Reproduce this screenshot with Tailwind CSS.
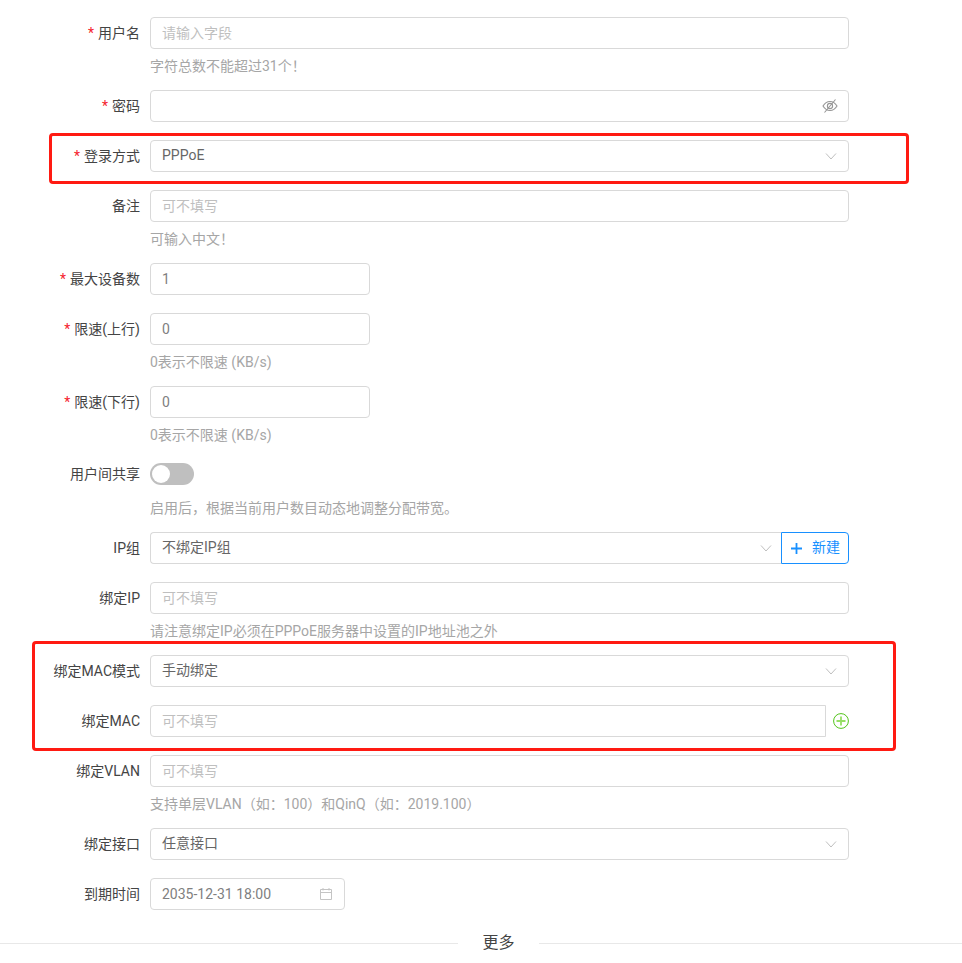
<!DOCTYPE html>
<html lang="zh-CN">
<head>
  <meta charset="UTF-8" />
  <title>用户设置</title>
  <script src="https://cdn.jsdelivr.net/npm/@tailwindcss/browser@4"></script>
</head>
<body class="bg-white font-['Roboto','Noto_Sans_CJK_SC',sans-serif] text-sm text-[#666]">
  <div class="relative h-[963px] w-[962px] overflow-hidden pt-[17px]">

    <!-- 用户名 -->
    <div class="flex h-8 w-[849px]">
      <label class="flex w-[140px] items-center justify-end text-[#444]"><span class="mr-1 text-[#f5222d]">*</span>用户名</label>
      <input class="ml-[10px] h-8 w-[699px] rounded border border-[#d9d9d9] px-[11px] outline-none placeholder:text-[#bfbfbf]" placeholder="请输入字段" />
    </div>
    <p class="mt-2 mb-[15px] ml-[150px] h-[18px] leading-[18px] text-[#a6a6a6]">字符总数不能超过31个！</p>

    <!-- 密码 -->
    <div class="mb-[18px] flex h-8 w-[849px]">
      <label class="flex w-[140px] items-center justify-end text-[#444]"><span class="mr-1 text-[#f5222d]">*</span>密码</label>
      <div class="relative ml-[10px] w-[699px]">
        <input type="password" class="h-8 w-full rounded border border-[#d9d9d9] px-[11px] outline-none" />
        <svg class="absolute top-2 right-[11px] h-4 w-4" viewBox="0 0 16 16" fill="none" stroke="#969696" stroke-width="1.100">
          <path d="M1 8c1.800-3 4.100-4.500 7-4.500S13.200 5 15 8c-1.800 3-4.100 4.500-7 4.500S2.800 11 1 8z" />
          <circle cx="8" cy="8" r="2.600" />
          <path d="M13.500 1.500 2.500 14.500" />
        </svg>
      </div>
    </div>

    <!-- 登录方式 -->
    <div class="mb-[18px] flex h-8 w-[849px]">
      <label class="flex w-[140px] items-center justify-end text-[#444]"><span class="mr-1 text-[#f5222d]">*</span>登录方式</label>
      <div class="ml-[10px] flex h-8 w-[699px] items-center justify-between rounded border border-[#d9d9d9] px-[11px]">
        <span class="-mt-0.5">PPPoE</span>
        <svg class="h-3 w-3" viewBox="0 0 12 12" fill="none" stroke="#bfbfbf" stroke-width="1"><path d="M1 3.500 6 9l5-5.500" /></svg>
      </div>
    </div>

    <!-- 备注 -->
    <div class="flex h-8 w-[849px]">
      <label class="flex w-[140px] items-center justify-end text-[#444]">备注</label>
      <input class="ml-[10px] h-8 w-[699px] rounded border border-[#d9d9d9] px-[11px] outline-none placeholder:text-[#bfbfbf]" placeholder="可不填写" />
    </div>
    <p class="mt-2 mb-[15px] ml-[150px] h-[18px] leading-[18px] text-[#a6a6a6]">可输入中文！</p>

    <!-- 最大设备数 -->
    <div class="mb-[18px] flex h-8">
      <label class="flex w-[140px] items-center justify-end text-[#444]"><span class="mr-1 text-[#f5222d]">*</span>最大设备数</label>
      <input class="ml-[10px] h-8 w-[220px] rounded border border-[#d9d9d9] px-[11px] text-[#808080] outline-none" value="1" />
    </div>

    <!-- 限速 -->
    <div class="flex h-8">
      <label class="flex w-[140px] items-center justify-end text-[#444]"><span class="mr-1 text-[#f5222d]">*</span>限速(上行)</label>
      <input class="ml-[10px] h-8 w-[220px] rounded border border-[#d9d9d9] px-[11px] text-[#808080] outline-none" value="0" />
    </div>
    <p class="mt-2 mb-[15px] ml-[150px] h-[18px] leading-[18px] text-[#a6a6a6]">0表示不限速 (KB/s)</p>

    <div class="flex h-8">
      <label class="flex w-[140px] items-center justify-end text-[#444]"><span class="mr-1 text-[#f5222d]">*</span>限速(下行)</label>
      <input class="ml-[10px] h-8 w-[220px] rounded border border-[#d9d9d9] px-[11px] text-[#808080] outline-none" value="0" />
    </div>
    <p class="mt-2 mb-[15px] ml-[150px] h-[18px] leading-[18px] text-[#a6a6a6]">0表示不限速 (KB/s)</p>

    <!-- 用户间共享 -->
    <div class="flex h-8">
      <label class="flex w-[140px] items-center justify-end pb-0.5 text-[#444]">用户间共享</label>
      <div class="ml-[10px] flex items-center pb-0.5">
        <div class="flex h-[22px] w-[44px] items-center rounded-full bg-[#bfbfbf] pl-0.5">
          <div class="h-[18px] w-[18px] rounded-full bg-white"></div>
        </div>
      </div>
    </div>
    <p class="mt-2 mb-[15px] ml-[150px] h-[18px] leading-[18px] text-[#a6a6a6]">启用后，根据当前用户数目动态地调整分配带宽。</p>

    <!-- IP组 -->
    <div class="mb-[18px] flex h-8 w-[849px]">
      <label class="flex w-[140px] items-center justify-end text-[#444]">IP组</label>
      <div class="ml-[10px] flex h-8 w-[631px] items-center justify-between rounded-l border border-r-0 border-[#d9d9d9] px-[11px]">
        <span class="-mt-0.5">不绑定IP组</span>
        <svg class="-mr-0.5 h-3 w-3" viewBox="0 0 12 12" fill="none" stroke="#bfbfbf" stroke-width="1"><path d="M1 3.500 6 9l5-5.500" /></svg>
      </div>
      <button class="flex h-8 w-[68px] items-center justify-center gap-[10px] rounded-r border border-[#1890ff] pl-px text-[#1890ff]">
        <svg class="h-[11px] w-[11px]" viewBox="0 0 11 11" fill="none" stroke="#1890ff" stroke-width="1.800"><path d="M5.500 0v11M0 5.500h11" /></svg>
        <span class="-mt-0.5">新建</span>
      </button>
    </div>

    <!-- 绑定IP -->
    <div class="flex h-8 w-[849px]">
      <label class="flex w-[140px] items-center justify-end text-[#444]">绑定IP</label>
      <input class="ml-[10px] h-8 w-[699px] rounded border border-[#d9d9d9] px-[11px] outline-none placeholder:text-[#bfbfbf]" placeholder="可不填写" />
    </div>
    <p class="mt-2 mb-[15px] ml-[150px] h-[18px] leading-[18px] text-[#a6a6a6]">请注意绑定IP必须在PPPoE服务器中设置的IP地址池之外</p>

    <!-- 绑定MAC -->
    <div class="mb-[18px] flex h-8 w-[849px]">
      <label class="flex w-[140px] items-center justify-end text-[#444]">绑定MAC模式</label>
      <div class="ml-[10px] flex h-8 w-[699px] items-center justify-between rounded border border-[#d9d9d9] px-[11px]">
        <span class="-mt-0.5">手动绑定</span>
        <svg class="h-3 w-3" viewBox="0 0 12 12" fill="none" stroke="#bfbfbf" stroke-width="1"><path d="M1 3.500 6 9l5-5.500" /></svg>
      </div>
    </div>

    <div class="mb-[18px] flex h-8 w-[849px] items-center">
      <label class="flex w-[140px] items-center justify-end text-[#444]">绑定MAC</label>
      <input class="ml-[10px] h-8 w-[676px] rounded-l border border-[#d9d9d9] px-[11px] outline-none placeholder:text-[#bfbfbf]" placeholder="可不填写" />
      <svg class="ml-[7px] h-4 w-4" viewBox="0 0 16 16" fill="none">
        <circle cx="8" cy="8" r="7.400" stroke="#52c41a" stroke-width="1" />
        <path d="M8 3.500v9M3.500 8h9" stroke="#95de64" stroke-width="1.800" />
      </svg>
    </div>

    <!-- 绑定VLAN -->
    <div class="flex h-8 w-[849px]">
      <label class="flex w-[140px] items-center justify-end text-[#444]">绑定VLAN</label>
      <input class="ml-[10px] h-8 w-[699px] rounded border border-[#d9d9d9] px-[11px] outline-none placeholder:text-[#bfbfbf]" placeholder="可不填写" />
    </div>
    <p class="mt-2 mb-[15px] ml-[150px] h-[18px] leading-[18px] text-[#a6a6a6]">支持单层VLAN（如：100）和QinQ（如：2019.100）</p>

    <!-- 绑定接口 -->
    <div class="mb-[18px] flex h-8 w-[849px]">
      <label class="flex w-[140px] items-center justify-end text-[#444]">绑定接口</label>
      <div class="ml-[10px] flex h-8 w-[699px] items-center justify-between rounded border border-[#d9d9d9] px-[11px]">
        <span class="-mt-0.5">任意接口</span>
        <svg class="h-3 w-3" viewBox="0 0 12 12" fill="none" stroke="#bfbfbf" stroke-width="1"><path d="M1 3.500 6 9l5-5.500" /></svg>
      </div>
    </div>

    <!-- 到期时间 -->
    <div class="flex h-8">
      <label class="flex w-[140px] items-center justify-end text-[#444]">到期时间</label>
      <div class="ml-[10px] flex h-8 w-[195px] items-center justify-between rounded border border-[#d9d9d9] px-[11px] text-[#808080]">
        <span>2035-12-31 18:00</span>
        <svg class="h-[14px] w-[14px]" viewBox="0 0 14 14" fill="none" stroke="#c4c4c4" stroke-width="1"><path d="M1.500 2.500h11v10h-11zM1.500 5.500h11M4 1v2.500M10 1v2.500" /></svg>
      </div>
    </div>

    <!-- 更多 -->
    <div class="mt-5 flex h-[26px] items-center">
      <div class="h-px w-[458px] bg-[#e8e8e8]"></div>
      <span class="w-[81px] text-center text-base text-[#444]">更多</span>
      <div class="h-px flex-1 bg-[#e8e8e8]"></div>
    </div>

    <!-- 截图上的红框标注 -->
    <div class="absolute top-[133px] left-[49px] h-[51px] w-[860px] rounded-sm border-[3px] border-[#ff1a12]"></div>
    <div class="absolute top-[641px] left-[32px] h-[110px] w-[864px] rounded-sm border-[3px] border-[#ff1a12]"></div>
  </div>
</body>
</html>
